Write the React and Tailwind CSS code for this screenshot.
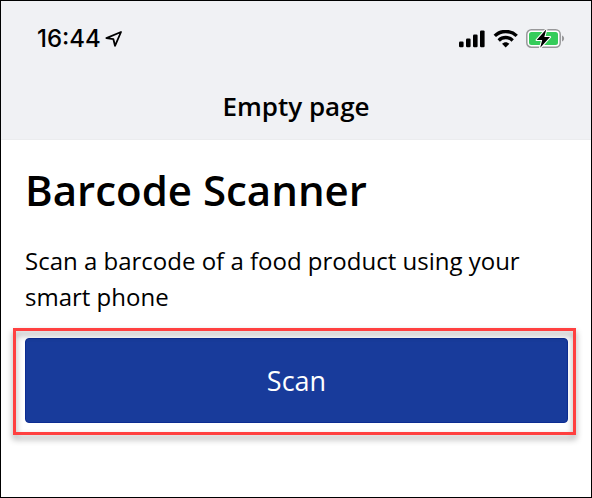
function LocationArrow() {
  return (
    <svg className="h-4 w-[17px]" viewBox="0 0 17 16" fill="none" stroke="#000" strokeWidth="1.8" strokeLinejoin="round" aria-hidden="true">
      <path d="M16 1 L1.4 7.2 L8.4 8.2 L10 14.8 Z" />
    </svg>
  );
}

function Signal() {
  return (
    <svg className="h-[18px] w-[27px]" viewBox="0 0 27 18" fill="#000" aria-hidden="true">
      <rect x="1" y="11.5" width="4.6" height="5.8" rx="1.2" />
      <rect x="8" y="8.5" width="4.6" height="8.8" rx="1.2" />
      <rect x="15" y="4.5" width="4.6" height="12.8" rx="1.2" />
      <rect x="22" y="0.4" width="4.6" height="16.9" rx="1.2" />
    </svg>
  );
}

function Wifi() {
  return (
    <svg className="h-[18px] w-[25px]" viewBox="0 0 25 18" fill="none" stroke="#000" strokeWidth="3.4" aria-hidden="true">
      <path d="M1.8 5.9 C7.7 0 17.7 0 23.7 5.9" />
      <path d="M5.7 10.4 C9.7 6.6 15.7 6.6 19.7 10.4" />
      <path d="M9 13.7 C11.2 11.6 14.2 11.6 16.4 13.7 L12.7 17.4 Z" fill="#000" stroke="none" />
    </svg>
  );
}

function Battery() {
  return (
    <svg className="h-5 w-[39px]" viewBox="0 0 39 20" aria-hidden="true">
      <rect x="0.8" y="0.8" width="33.4" height="17.4" rx="4.5" fill="#fff" stroke="#98989a" strokeWidth="1.5" />
      <rect x="3" y="3.1" width="29" height="12.8" rx="2.5" fill="#35cc5a" />
      <path d="M36 6.5 C38.8 7.5 38.8 11.5 36 12.5 Z" fill="#98989a" />
      <path d="M20.3 0.3 L10.7 10.9 H16.2 L14.2 18.7 L24 8.1 H18.3 Z" fill="#000" stroke="#fff" strokeWidth="2.2" strokeLinejoin="round" paintOrder="stroke" />
    </svg>
  );
}

export default function App() {
  return (
    <div className="flex min-h-screen flex-col border border-black bg-white font-['Open_Sans','Noto_Sans',sans-serif] text-black">
      <header className="border-b border-[#ebecee] bg-[#f0f1f4] pb-[11px]">
        <div className="flex h-[83px] items-start justify-between pt-6 pr-[26px] pl-9">
          <div className="flex items-center gap-1 font-['Inter',sans-serif] text-2xl leading-7 font-medium">
            <time>16:44</time>
            <LocationArrow />
          </div>
          <div className="flex h-7 items-center gap-2">
            <Signal />
            <Wifi />
            <Battery />
          </div>
        </div>
        <p className="text-center text-[26px] leading-[44px] font-semibold">Empty page</p>
      </header>
      <main className="pt-5 pr-[23px] pl-6">
        <h1 className="text-[42px] leading-[60px] font-semibold">Barcode Scanner</h1>
        <p className="mt-[23px] text-2xl leading-9">Scan a barcode of a food product using your smart phone</p>
        <div className="relative mt-[23px]">
          <button type="button" className="block h-[85px] w-full rounded border border-[#0c2c92] bg-[#183b9b] text-[27px] leading-9 text-white">
            Scan
          </button>
          <div className="pointer-events-none absolute -top-2.5 -right-2 -bottom-3 -left-3 border-3 border-[#ff4040] drop-shadow-[0_4px_3px_rgba(0,0,0,0.4)]" />
        </div>
      </main>
    </div>
  );
}
